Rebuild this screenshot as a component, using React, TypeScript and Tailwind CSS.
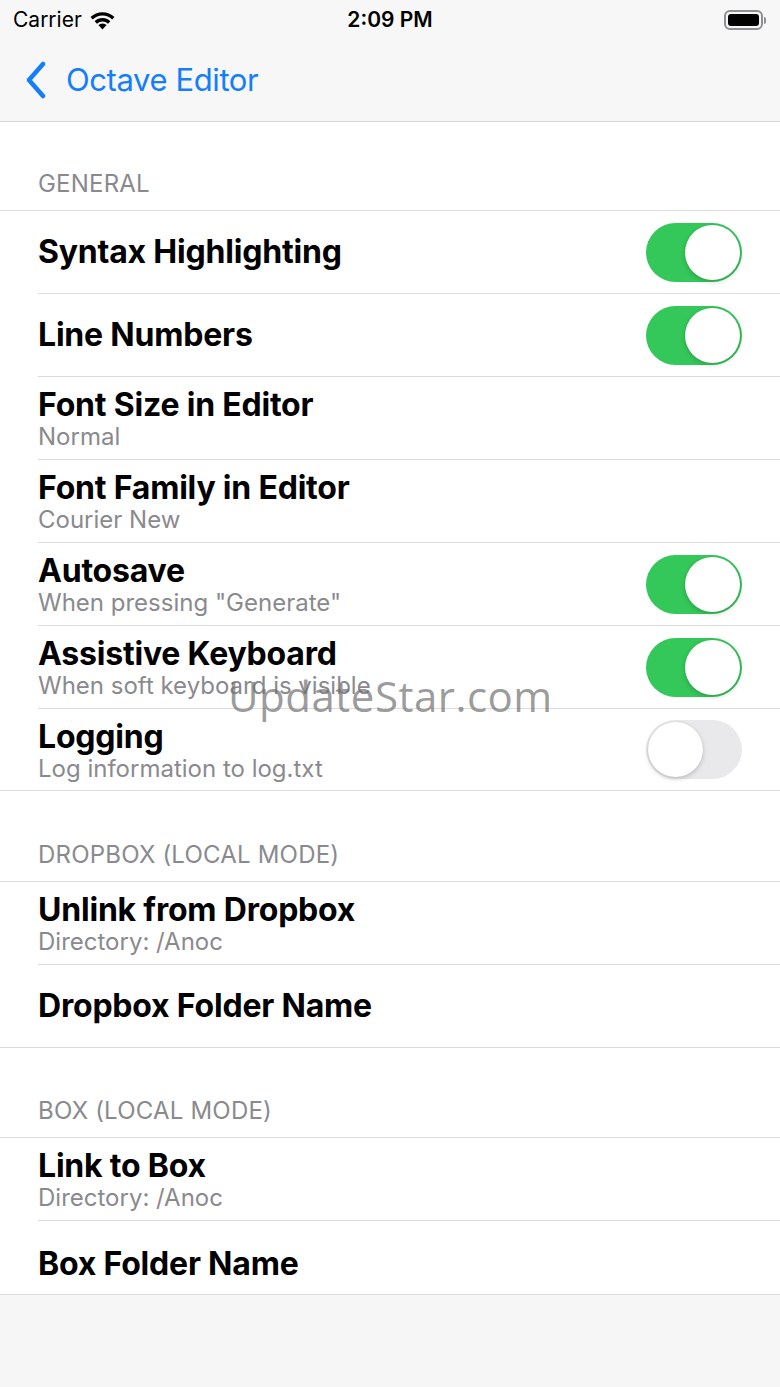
import React from 'react';

type Row = {
  title: string;
  subtitle?: string;
  toggle?: 'on' | 'off';
};

const general: Row[] = [
  { title: 'Syntax Highlighting', toggle: 'on' },
  { title: 'Line Numbers', toggle: 'on' },
  { title: 'Font Size in Editor', subtitle: 'Normal' },
  { title: 'Font Family in Editor', subtitle: 'Courier New' },
  { title: 'Autosave', subtitle: 'When pressing "Generate"', toggle: 'on' },
  { title: 'Assistive Keyboard', subtitle: 'When soft keyboard is visible', toggle: 'on' },
  { title: 'Logging', subtitle: 'Log information to log.txt', toggle: 'off' },
];

const dropbox: Row[] = [
  { title: 'Unlink from Dropbox', subtitle: 'Directory: /Anoc' },
  { title: 'Dropbox Folder Name' },
];

const box: Row[] = [
  { title: 'Link to Box', subtitle: 'Directory: /Anoc' },
  { title: 'Box Folder Name' },
];

function Toggle({ on }: { on: boolean }) {
  return (
    <div
      className={
        on
          ? 'w-[96px] h-[59px] rounded-full bg-[#34c759] flex items-center justify-end p-[2px]'
          : 'w-[96px] h-[59px] rounded-full bg-[#e9e9eb] flex items-center justify-start p-[2px]'
      }
    >
      <div className="w-[55px] h-[55px] rounded-full bg-white shadow-[0_2px_5px_rgba(0,0,0,0.18),0_0_1px_rgba(0,0,0,0.15)]" />
    </div>
  );
}

function SettingRow({ row, last, height, extraTop }: { row: Row; last: boolean; height: string; extraTop?: boolean }) {
  return (
    <div className={height + ' pl-[38px] bg-white'}>
      <div
        className={
          'h-full flex items-center pr-[38px] ' +
          (last ? '' : 'border-b border-[#dcdcde] ') +
          (extraTop ? 'pt-[12px]' : '')
        }
      >
        <div className={row.subtitle ? 'flex-1 flex flex-col pt-[2px]' : 'flex-1 flex flex-col'}>
          <div className="text-[32px] leading-[36px] font-bold text-black tracking-[-0.2px]">{row.title}</div>
          {row.subtitle && (
            <div className="text-[24px] leading-[28px] text-[#8a8a8e]">{row.subtitle}</div>
          )}
        </div>
        {row.toggle && <Toggle on={row.toggle === 'on'} />}
      </div>
    </div>
  );
}

function Section({
  header,
  rows,
  headerH,
  lastH,
  shortLast,
}: {
  header: string;
  rows: Row[];
  headerH: string;
  lastH: string;
  shortLast?: boolean;
}) {
  return (
    <div>
      <div className={headerH + ' bg-white flex items-end pl-[38px] pb-[8px]'}>
        <span className="text-[24px] text-[#8a8a8e] uppercase tracking-[0.2px]">{header}</span>
      </div>
      <div className="border-y border-[#dcdcde]">
        {rows.map((r, i) => {
          const last = i === rows.length - 1;
          return (
            <SettingRow
              key={r.title}
              row={r}
              last={last}
              height={last ? lastH : 'h-[83px]'}
              extraTop={shortLast && last}
            />
          );
        })}
      </div>
    </div>
  );
}

export default function App() {
  return (
    <div
      className="relative w-[780px] min-h-[1387px] bg-[#f6f6f6] overflow-hidden"
      style={{ fontFamily: 'Inter, "Noto Sans", sans-serif' }}
    >
      {/* status bar */}
      <div className="h-[40px] bg-[#f7f7f7] flex items-center justify-between px-[13px] relative">
        <div className="flex items-center gap-[7px]">
          <span className="text-[21px] text-black">Carrier</span>
          <svg width="27" height="20" viewBox="0 0 27 20">
            <path d="M13.5 19.5 L9.4 15.1 A6 6 0 0 1 17.6 15.1 Z" fill="#000" />
            <path d="M5.6 11.2 A11.5 11.5 0 0 1 21.4 11.2 L19 13.7 A8 8 0 0 0 8 13.7 Z" fill="#000" />
            <path d="M1.5 7 A17.5 17.5 0 0 1 25.5 7 L23.2 9.5 A14 14 0 0 0 3.8 9.5 Z" fill="#000" />
          </svg>
        </div>
        <span className="absolute left-0 right-0 text-center text-[21px] font-semibold text-black pointer-events-none">
          2:09 PM
        </span>
        <div className="flex items-center mr-[1px]">
          <div className="w-[39px] h-[20px] rounded-[6px] border-[2px] border-[#8e8e93] p-[2px]">
            <div className="w-full h-full rounded-[3px] bg-black" />
          </div>
          <div className="w-[2px] h-[7px] rounded-r-full bg-[#8e8e93] ml-[1px]" />
        </div>
      </div>

      {/* nav bar */}
      <div className="h-[82px] bg-[#f7f7f7] border-b border-[#d6d6d8] flex items-center pl-[24px]">
        <svg width="24" height="38" viewBox="0 0 24 38" className="mt-[-2px]">
          <path d="M19 3 L5 19 L19 35" fill="none" stroke="#147efb" strokeWidth="4.5" strokeLinecap="round" strokeLinejoin="round" />
        </svg>
        <span className="ml-[18px] text-[31px] text-[#147efb] tracking-[-0.4px]">Octave Editor</span>
      </div>

      <Section header="General" rows={general} headerH="h-[88px]" lastH="h-[81px]" />
      <Section header="Dropbox (Local Mode)" rows={dropbox} headerH="h-[90px]" lastH="h-[82px]" />
      <Section header="Box (Local Mode)" rows={box} headerH="h-[89px]" lastH="h-[73px]" shortLast />

      {/* watermark */}
      <div
        className="absolute left-[228px] top-[670px] text-[42px] leading-[52px] text-[#6f6f6f]/70 tracking-[0.5px] pointer-events-none"
        style={{ fontFamily: '"Open Sans", sans-serif' }}
      >
        UpdateStar.com
      </div>
    </div>
  );
}
